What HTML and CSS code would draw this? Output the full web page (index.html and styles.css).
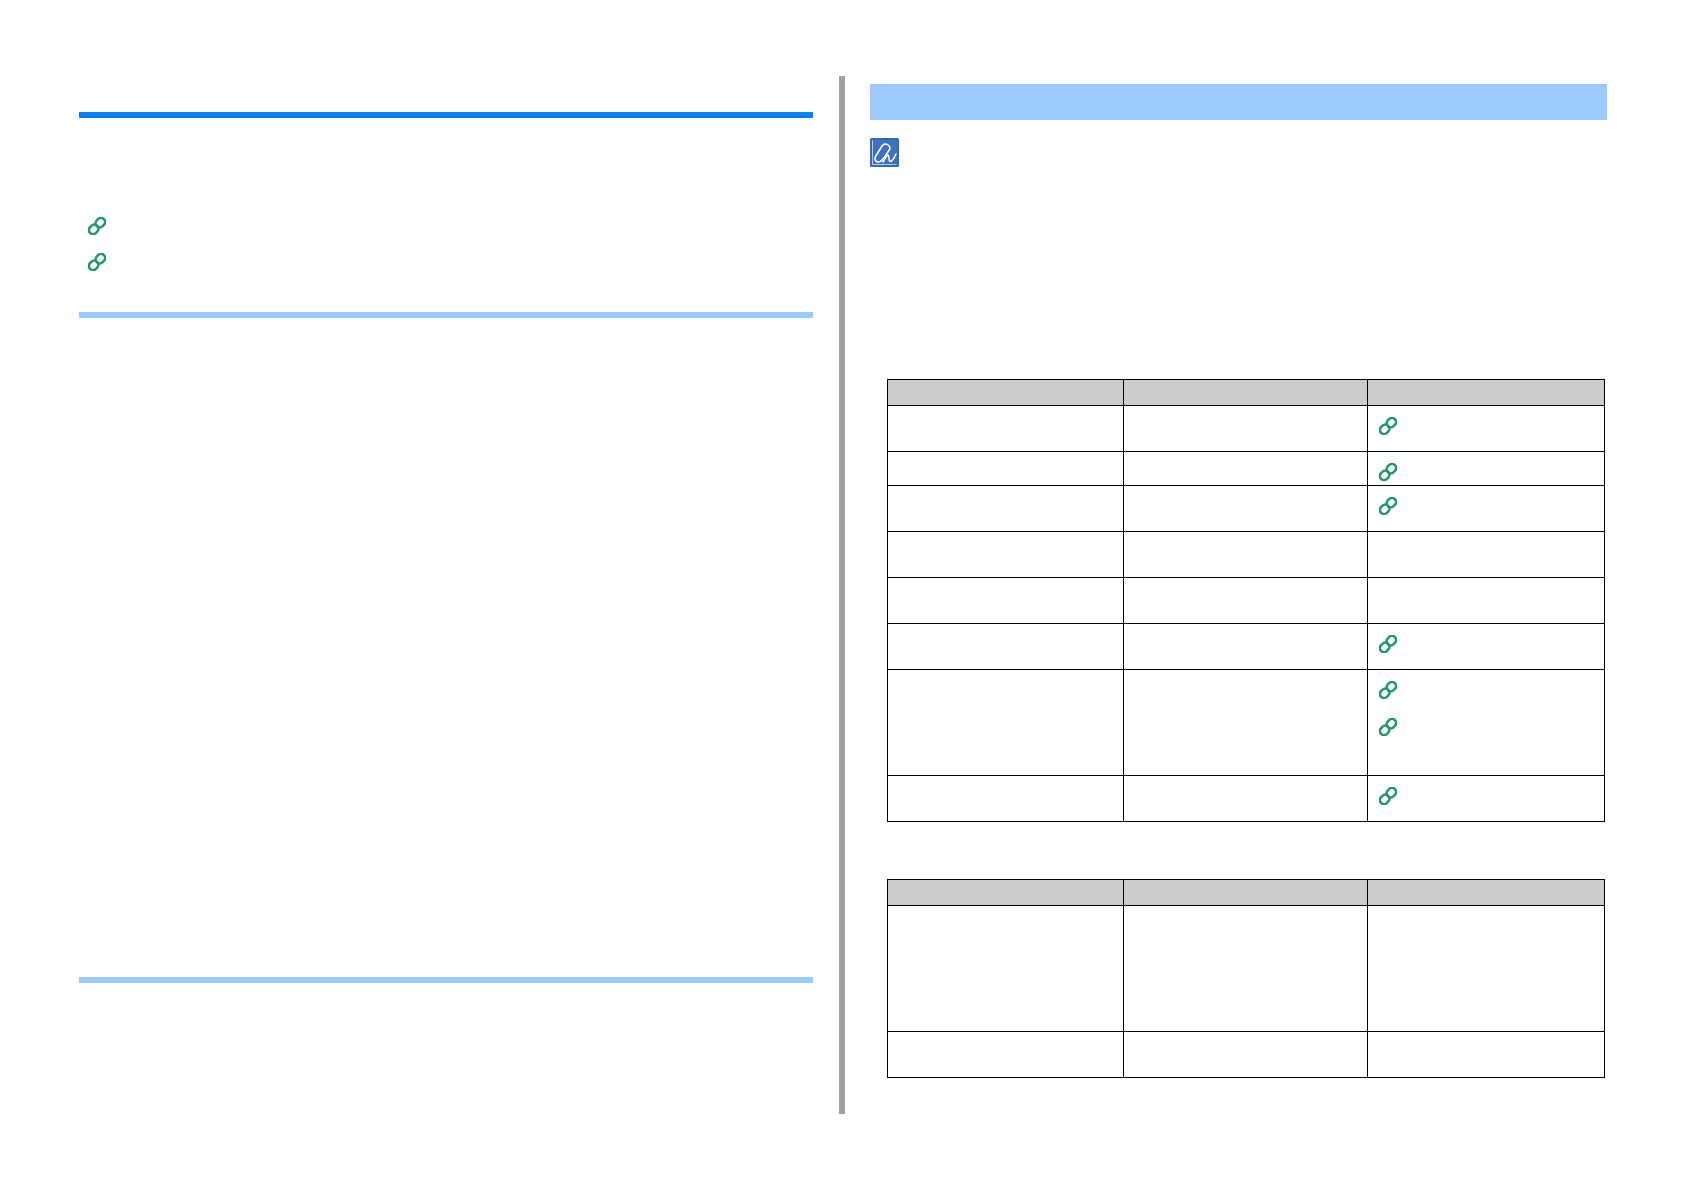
FILE: index.html
```html
<!DOCTYPE html>
<html lang="en">
<head>
<meta charset="utf-8">
<title>Manual page</title>
<link rel="stylesheet" href="styles.css">
</head>
<body>
<svg class="defs" width="0" height="0" aria-hidden="true">
  <defs>
    <symbol id="chain" viewBox="0 0 18 18">
      <g fill="none" stroke="#27976b" stroke-width="2.6" transform="rotate(-45 9 9)">
        <rect x="-0.7" y="4.9" width="9.900" height="8.200" rx="4.100"/>
        <rect x="8.800" y="4.9" width="9.900" height="8.200" rx="4.100"/>
      </g>
    </symbol>
  </defs>
</svg>
<main class="page">
  <section class="left">
    <div class="bar bar-main"></div>
    <ul class="links">
      <li class="link"><svg class="chain"><use href="#chain"/></svg></li>
      <li class="link"><svg class="chain"><use href="#chain"/></svg></li>
    </ul>
    <div class="bar bar-sub first-sub"></div>
    <div class="bar bar-sub second-sub"></div>
  </section>
  <section class="right">
    <div class="banner"></div>
    <svg class="note" viewBox="0 0 29 29" aria-hidden="true">
      <rect width="29" height="29" rx="1.5" fill="#3469b3"/>
      <rect x="2" y="2" width="25" height="25" fill="#3f72bb"/>
      <path d="M2.500 2.500V26.500H26.500" fill="none" stroke="#b5c9e6" stroke-width="1"/>
      <path d="M7 24C5 22.500 4.500 20.500 5.500 18.500L12 8C13.500 6 16 5.500 18 7 20 8.500 20.500 10.500 19 12.500L13 21C11.500 23 9.500 24.500 7 24Z" fill="none" stroke="#fff" stroke-width="1.500" stroke-linecap="round" stroke-linejoin="round"/>
      <path d="M13 24C15 21 16.500 17 18 17 19.500 17 18.500 23.500 20 23.500 22 23.500 24.500 19.500 26 16" fill="none" stroke="#fff" stroke-width="1.500" stroke-linecap="round" stroke-linejoin="round"/>
    </svg>
    <table class="grid grid-one">
      <colgroup><col class="c1"><col class="c2"><col class="c3"></colgroup>
      <tr class="head"><th></th><th></th><th></th></tr>
      <tr class="h46"><td></td><td></td><td><svg class="chain"><use href="#chain"/></svg></td></tr>
      <tr class="h34"><td></td><td></td><td><svg class="chain"><use href="#chain"/></svg></td></tr>
      <tr class="h46"><td></td><td></td><td><svg class="chain"><use href="#chain"/></svg></td></tr>
      <tr class="h46"><td></td><td></td><td></td></tr>
      <tr class="h46"><td></td><td></td><td></td></tr>
      <tr class="h46"><td></td><td></td><td><svg class="chain"><use href="#chain"/></svg></td></tr>
      <tr class="h106"><td></td><td></td><td><svg class="chain"><use href="#chain"/></svg><svg class="chain next"><use href="#chain"/></svg></td></tr>
      <tr class="h46"><td></td><td></td><td><svg class="chain"><use href="#chain"/></svg></td></tr>
    </table>
    <table class="grid grid-two">
      <colgroup><col class="c1"><col class="c2"><col class="c3"></colgroup>
      <tr class="head"><th></th><th></th><th></th></tr>
      <tr class="h126"><td></td><td></td><td></td></tr>
      <tr class="h46"><td></td><td></td><td></td></tr>
    </table>
  </section>
</main>
</body>
</html>
```
FILE: styles.css
```css
html, body {
  margin: 0;
  background: #fff;
  font-family: "Liberation Sans", Arial, sans-serif;
}
.defs { display: block; height: 0; }
.page {
  display: flex;
  align-items: flex-start;
  padding: 76px 0 0 79px;
}
.left {
  width: 734px;
  padding-top: 36px;
  margin-right: 26px;
}
.bar { height: 6px; }
.bar-main { background: #007fff; }
.bar-sub { background: #9ccaff; }
.links {
  list-style: none;
  margin: 99px 0 0;
  padding: 0 0 0 9px;
  display: flex;
  flex-direction: column;
  gap: 18px;
}
.link { height: 18px; }
.chain { display: block; width: 18px; height: 18px; }
.first-sub { margin-top: 41px; }
.second-sub { margin-top: 659px; }
.right {
  width: 737px;
  height: 1030px;
  border-left: 6px solid #a0a0a0;
  padding: 8px 0 0 25px;
}
.banner { height: 36px; background: #9ccaff; }
.note { display: block; width: 29px; height: 29px; margin-top: 18px; }
.grid {
  border-collapse: collapse;
  table-layout: fixed;
  width: 717px;
  margin-left: 17px;
}
.grid-one { margin-top: 212px; }
.grid-two { margin-top: 57px; }
.c1 { width: 236px; }
.c2 { width: 244px; }
.c3 { width: 237px; }
.grid th, .grid td {
  border: 1px solid #000;
  padding: 11px 0 0 11px;
  vertical-align: top;
}
.grid th { background: #ccc; padding: 0; }
.head { height: 26px; }
.h34 { height: 34px; }
.h46 { height: 46px; }
.h106 { height: 106px; }
.h126 { height: 126px; }
.next { margin-top: 19px; }
```
